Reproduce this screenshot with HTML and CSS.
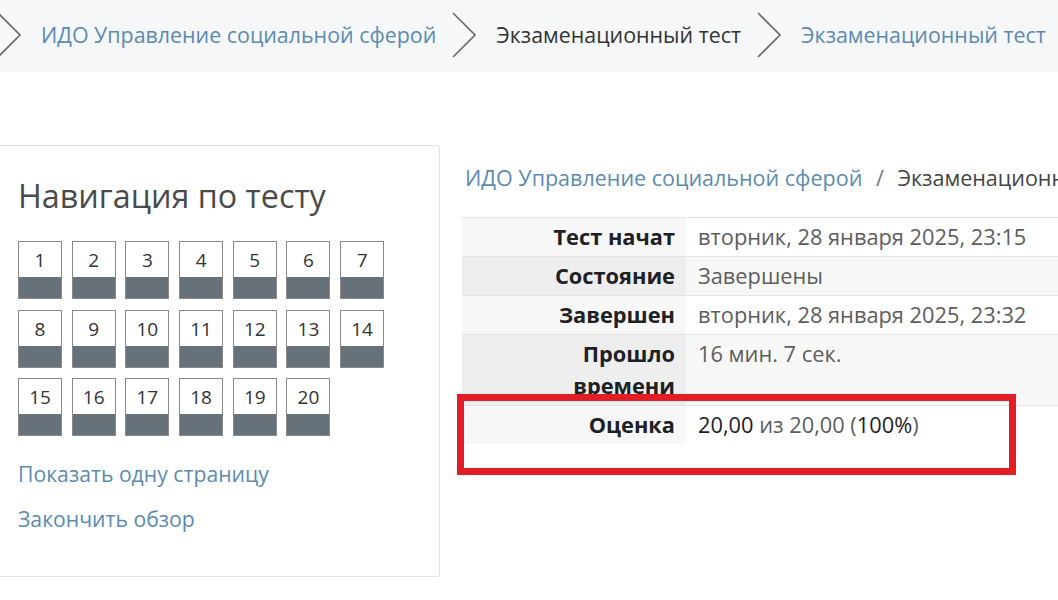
FILE: index.html
```html
<!DOCTYPE html>
<html lang="ru">
<head>
    <meta charset="UTF-8">
    <meta name="viewport" content="width=device-width, initial-scale=1.0">
    <title>Экзаменационный тест: просмотр</title>
    <link rel="stylesheet" href="styles.css">
</head>
<body>
    <nav class="topcrumbs">
        <ol>
            <li><svg class="chev" viewBox="0 0 24 48"><polyline points="1,2 23,24 1,46"/></svg><a href="#">ИДО Управление социальной сферой</a></li>
            <li><svg class="chev" viewBox="0 0 24 48"><polyline points="1,2 23,24 1,46"/></svg><span>Экзаменационный тест</span></li>
            <li><svg class="chev" viewBox="0 0 24 48"><polyline points="1,2 23,24 1,46"/></svg><a href="#">Экзаменационный тест</a></li>
        </ol>
    </nav>

    <div class="page">
        <aside class="quiznav">
            <h2>Навигация по тесту</h2>
            <div class="qbuttons">
                <a class="qbtn" href="#"><span>1</span></a>
                <a class="qbtn" href="#"><span>2</span></a>
                <a class="qbtn" href="#"><span>3</span></a>
                <a class="qbtn" href="#"><span>4</span></a>
                <a class="qbtn" href="#"><span>5</span></a>
                <a class="qbtn" href="#"><span>6</span></a>
                <a class="qbtn" href="#"><span>7</span></a>
                <a class="qbtn" href="#"><span>8</span></a>
                <a class="qbtn" href="#"><span>9</span></a>
                <a class="qbtn" href="#"><span>10</span></a>
                <a class="qbtn" href="#"><span>11</span></a>
                <a class="qbtn" href="#"><span>12</span></a>
                <a class="qbtn" href="#"><span>13</span></a>
                <a class="qbtn" href="#"><span>14</span></a>
                <a class="qbtn" href="#"><span>15</span></a>
                <a class="qbtn" href="#"><span>16</span></a>
                <a class="qbtn" href="#"><span>17</span></a>
                <a class="qbtn" href="#"><span>18</span></a>
                <a class="qbtn" href="#"><span>19</span></a>
                <a class="qbtn" href="#"><span>20</span></a>
            </div>
            <div class="navlinks">
                <a href="#">Показать одну страницу</a>
                <a href="#">Закончить обзор</a>
            </div>
        </aside>

        <main class="content">
            <div class="pathline">
                <a href="#">ИДО Управление социальной сферой</a>
                <span class="sep">/</span>
                <span>Экзаменационный тест</span>
            </div>

            <table class="summary">
                <tr>
                    <th>Тест начат</th>
                    <td>вторник, 28 января 2025, 23:15</td>
                </tr>
                <tr>
                    <th>Состояние</th>
                    <td>Завершены</td>
                </tr>
                <tr>
                    <th>Завершен</th>
                    <td>вторник, 28 января 2025, 23:32</td>
                </tr>
                <tr>
                    <th>Прошло времени</th>
                    <td>16 мин. 7 сек.</td>
                </tr>
                <tr class="lastrow">
                    <th>Оценка</th>
                    <td><b>20,00</b> из 20,00 (<b>100%</b>)</td>
                </tr>
            </table>

            <!-- red marker someone drew over the screenshot -->
            <div class="highlight"></div>
        </main>
    </div>
</body>
</html>
```

FILE: styles.css
```css
body {
    margin: 0;
    font-family: "Open Sans", "Noto Sans", sans-serif;
    color: #333;
    background: #fff;
    overflow: hidden;
}
a {
    color: #5b8bb1;
    text-decoration: none;
}

/* top breadcrumb bar */
.topcrumbs {
    background-color: #f6f7f9;
    height: 72px;
    display: flex;
    align-items: center;
}
.topcrumbs ol {
    list-style: none;
    margin: -3px 0 0 -3px;
    padding: 0;
    display: flex;
    align-items: center;
    white-space: nowrap;
    font-size: 21.4px;
}
.topcrumbs li {
    display: flex;
    align-items: center;
    margin-right: 16px;
}
.topcrumbs li span {
    color: #333;
}
.chev {
    width: 24px;
    height: 48px;
    margin-right: 20px;
}
.chev polyline {
    fill: none;
    stroke: #6b6b6b;
    stroke-width: 1.6;
}

.page {
    display: flex;
    align-items: flex-start;
    padding-top: 73px;
}

/* quiz navigation block */
.quiznav {
    width: 421px;
    flex-shrink: 0;
    padding: 31px 0 42px 18px;
    border: 1px solid #e3e3e3;
    border-left: 0;
    border-radius: 0 3px 3px 0;
}
.quiznav h2 {
    margin: 0 0 27px 0;
    font-size: 32.3px;
    line-height: 37px;
    font-weight: 400;
    color: #4a4a4a;
}
.qbuttons {
    display: grid;
    grid-template-columns: repeat(7, 44px);
    column-gap: 9.7px;
    row-gap: 10.5px;
}
.qbtn {
    height: 58px;
    box-sizing: border-box;
    border: 1.5px solid #8a8a8a;
    background: linear-gradient(#fff 0, #fff 35px, #66717a 35px);
    display: flex;
    justify-content: center;
    color: #333;
    font-size: 19px;
}
.qbtn span {
    line-height: 36px;
}
.navlinks {
    display: flex;
    flex-direction: column;
    gap: 14px;
    margin-top: 22px;
}
.navlinks a {
    font-size: 21.2px;
    line-height: 31px;
}

/* summary table */
.content {
    position: relative;
    flex: 1;
    min-width: 0;
    margin-left: 22px;
    padding-top: 16px;
}
.pathline {
    font-size: 21.5px;
    line-height: 33px;
    white-space: nowrap;
    overflow: hidden;
    margin: 0 0 23px 3px;
    color: #444;
}
.pathline .sep {
    color: #777;
    margin: 0 8px;
}
.summary {
    border-collapse: collapse;
    table-layout: fixed;
    width: 640px;
    font-size: 21.8px;
    line-height: 32px;
    border-top: 1px solid #e4e4e4;
}
.summary th {
    width: 189px;
    text-align: right;
    padding: 3px 11px 3px 24px;
    font-weight: 700;
    color: #1d2125;
    background-color: #f7f7f7;
    vertical-align: top;
}
.summary td {
    padding: 3px 12px;
    color: #5d5d5d;
    vertical-align: top;
}
.summary tr {
    border-bottom: 1px solid #e4e4e4;
}
.summary tr:nth-child(even) th {
    background-color: #eeeeee;
}
.summary tr:nth-child(even) td {
    background-color: #f8f8f8;
}
.summary tr.lastrow {
    border-bottom: 0;
}
.summary td b {
    font-weight: 400;
    color: #1d2125;
}

.highlight {
    position: absolute;
    left: -5px;
    top: 249px;
    width: 559px;
    height: 81px;
    box-sizing: border-box;
    border: 7px solid #e21d25;
}
```
